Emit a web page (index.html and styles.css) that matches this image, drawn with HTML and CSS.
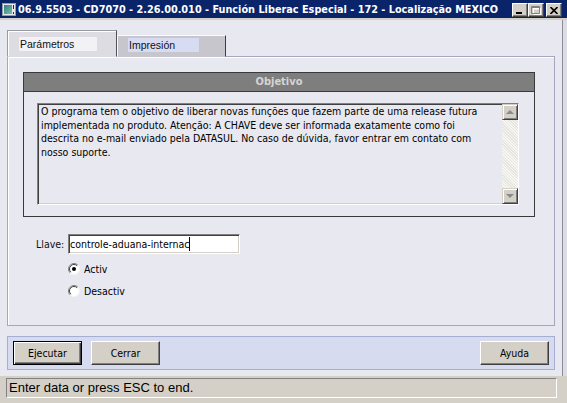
FILE: index.html
```html
<!DOCTYPE html>
<html lang="pt">
<head>
<meta charset="utf-8">
<title>CD7070</title>
<link rel="stylesheet" href="styles.css">
</head>
<body>
<div class="window">
  <div class="titlebar">
    <svg class="appicon" width="14" height="13" viewBox="0 0 14 13">
      <defs>
        <linearGradient id="ig" x1="0" y1="0" x2="1" y2="1">
          <stop offset="0" stop-color="#2f7f86"/>
          <stop offset="1" stop-color="#7cc0a4"/>
        </linearGradient>
      </defs>
      <rect x="0.5" y="0.5" width="13" height="12" fill="#e8e8e8" stroke="#9a9aa6"/>
      <rect x="2" y="2" width="8" height="9" fill="url(#ig)"/>
      <rect x="11" y="2" width="1" height="4" fill="#203040"/>
      <rect x="11" y="9" width="1" height="2" fill="#203040"/>
    </svg>
    <span class="title">06.9.5503 - CD7070 - 2.26.00.010 - Función Liberac Especial - 172 - Localização MEXICO</span>
    <div class="wbtns">
      <span class="wbtn"><svg width="8" height="7" viewBox="0 0 8 7"><rect x="0" y="5" width="6" height="2" fill="#000"/></svg></span>
      <span class="wbtn"><svg width="10" height="9" viewBox="0 0 10 9"><path d="M1.5 1.5h7v6h-7z M1 2h8" stroke="#fff" fill="none" transform="translate(1 1)"/><path d="M0.5 0.5h8v7h-8z M0 1.5h9" stroke="#808080" fill="none"/></svg></span>
      <span class="wbtn close"><svg width="8" height="7" viewBox="0 0 8 7"><path d="M0.5 0 L7.5 7 M7.5 0 L0.5 7" stroke="#000" stroke-width="1.6" fill="none"/></svg></span>
    </div>
  </div>

  <div class="frame">
    <div class="client">
      <div class="tabs">
        <div class="tab active"><span class="tablabel">Parámetros</span></div>
        <div class="tab"><span class="tablabel">Impresión</span></div>
      </div>
      <div class="panel">
        <div class="group">
          <div class="group-head">Objetivo</div>
          <div class="group-body">
            <div class="memo">
              <div class="memo-text">O programa tem o objetivo de liberar novas funções que fazem parte de uma release futura<br>implementada no produto. Atenção: A CHAVE deve ser informada exatamente como foi<br>descrita no e-mail enviado pela DATASUL. No caso de dúvida, favor entrar em contato com<br>nosso suporte.</div>
              <div class="vscroll">
                <div class="sbtn"><span class="arrow up"></span></div>
                <div class="strack"></div>
                <div class="sbtn"><span class="arrow down"></span></div>
              </div>
            </div>
          </div>
        </div>
        <div class="field">
          <span class="field-label">Llave:</span>
          <div class="input">controle-aduana-internac<span class="caret"></span></div>
        </div>
        <div class="radios">
          <div class="radio-row">
            <svg class="radio" width="12" height="12" viewBox="0 0 12 12">
              <circle cx="6" cy="6" r="5.5" fill="#fff"/>
              <path d="M2.1 9.9 A5.5 5.5 0 0 1 9.9 2.1" stroke="#808080" fill="none"/>
              <path d="M2.8 9.2 A4.5 4.5 0 0 1 9.2 2.8" stroke="#404040" fill="none"/>
              <path d="M9.9 2.1 A5.5 5.5 0 0 1 2.1 9.9" stroke="#f4f4f4" fill="none"/>
              <circle cx="6" cy="6" r="2" fill="#000"/>
            </svg>
            <span>Activ</span>
          </div>
          <div class="radio-row">
            <svg class="radio" width="12" height="12" viewBox="0 0 12 12">
              <circle cx="6" cy="6" r="5.5" fill="#fff"/>
              <path d="M2.1 9.9 A5.5 5.5 0 0 1 9.9 2.1" stroke="#808080" fill="none"/>
              <path d="M2.8 9.2 A4.5 4.5 0 0 1 9.2 2.8" stroke="#404040" fill="none"/>
              <path d="M9.9 2.1 A5.5 5.5 0 0 1 2.1 9.9" stroke="#f4f4f4" fill="none"/>
            </svg>
            <span>Desactiv</span>
          </div>
        </div>
      </div>
      <div class="btnbar">
        <button class="btn default">Ejecutar</button>
        <button class="btn">Cerrar</button>
        <button class="btn right">Ayuda</button>
      </div>
    </div>
    <div class="rframe"></div>
  </div>

  <div class="statusarea">
    <div class="status">Enter data or press ESC to end.</div>
  </div>
</div>
</body>
</html>
```

FILE: styles.css
```css
* { box-sizing: border-box; }
html, body { margin: 0; padding: 0; }
body {
  width: 567px;
  height: 403px;
  overflow: hidden;
  background: #d4d0c8;
  font-family: "DejaVu Sans Condensed", "DejaVu Sans", sans-serif;
  font-stretch: semi-condensed;
  font-size: 10.5px;
  color: #000;
}

.window {
  width: 567px;
  height: 403px;
  display: flex;
  flex-direction: column;
}

/* title bar */
.titlebar {
  flex: none;
  height: 20px;
  background: #0a246a;
  border-bottom: 2px solid #d4d0c8;
  display: flex;
  align-items: center;
  padding: 0 5px 0 2px;
}
.appicon { flex: none; display: block; }
.title {
  margin-left: 2px;
  color: #fff;
  font-weight: bold;
  font-size: 10.8px;
  white-space: nowrap;
}
.wbtns {
  margin-left: auto;
  margin-top: 2px;
  display: flex;
}
.wbtn {
  width: 16px;
  height: 14px;
  background: #d4d0c8;
  border: 1px solid;
  border-color: #fff #404040 #404040 #fff;
  box-shadow: inset -1px -1px #808080;
  display: flex;
  align-items: center;
  justify-content: center;
}
.wbtn svg { display: block; }
.wbtn.close { margin-left: 2px; }

/* frame */
.frame {
  flex: none;
  height: 356px;
  display: flex;
}
.client {
  width: 562px;
  flex: none;
  background: #e8e8f0;
  padding: 11px 7px 0 7px;
}
.rframe {
  flex: 1;
  border-left: 1px solid #8c8c96;
  background: #dcdce4;
}

/* tabs */
.tabs {
  display: flex;
  align-items: flex-end;
  height: 26px;
  margin-bottom: -1px;
}
.tab {
  width: 109px;
  height: 22px;
  background: #c6c6cc;
  border: 1px solid;
  border-color: #fbfbfd #3c3c44 transparent #fbfbfd;
  padding: 2px 0 0 10px;
}
.tab.active {
  position: relative;
  z-index: 1;
  width: 110px;
  height: 27px;
  background: #dcdce2;
  border-color: #9a9aa4 #505058 transparent #9a9aa4;
  box-shadow: inset 1px 1px #fff;
  padding: 6px 0 0 11px;
}
.tablabel {
  display: block;
  height: 14px;
  width: 71px;
  background: #d8dcf2;
  font-family: "Liberation Sans", Arial, sans-serif;
  font-stretch: normal;
  font-size: 10.5px;
  line-height: 14px;
  padding-left: 1px;
  color: #101010;
}
.tab.active .tablabel {
  width: 78px;
  background: #f2f2f6;
}

/* panel */
.panel {
  height: 270px;
  border: 1px solid #a4a8bc;
  box-shadow: inset 1px 1px #fff;
  padding: 15px 0 0 15px;
}

.group {
  width: 512px;
  height: 145px;
  border: 1px solid #3a3a3a;
  display: flex;
  flex-direction: column;
}
.group-head {
  flex: none;
  height: 19px;
  background: #7e7e7e;
  border-bottom: 1px solid #3a3a3a;
  color: #d4d4d4;
  font-weight: bold;
  font-size: 11px;
  line-height: 18px;
  text-align: center;
}
.group-body {
  padding: 11px 0 0 13px;
}
.memo {
  width: 482px;
  height: 102px;
  display: flex;
  border: 1px solid;
  border-color: #808080 #fff #fff #808080;
  box-shadow: inset 1px 1px #404040, inset -1px -1px #d4d0c8;
  background: #e8e8f0;
}
.memo-text {
  flex: 1;
  padding: 1px 0 0 3px;
  line-height: 13.6px;
  white-space: nowrap;
}
.vscroll {
  flex: none;
  width: 16px;
  display: flex;
  flex-direction: column;
}
.sbtn {
  flex: none;
  height: 16px;
  background: #d4d0c8;
  border: 1px solid;
  border-color: #d4d0c8 #404040 #404040 #d4d0c8;
  box-shadow: inset 1px 1px #fff, inset -1px -1px #808080;
  display: flex;
  align-items: center;
  justify-content: center;
}
.strack {
  flex: 1;
  background-color: #eeede8;
  background-image: repeating-linear-gradient(45deg, #f6f6f2 0 1px, #e6e5e0 1px 2px);
}
.arrow {
  width: 0;
  height: 0;
  border-left: 4px solid transparent;
  border-right: 4px solid transparent;
}
.arrow.up { border-bottom: 4px solid #8a8a8a; }
.arrow.down { border-top: 4px solid #8a8a8a; }

/* field */
.field {
  display: flex;
  align-items: center;
  margin-top: 17px;
  padding-left: 13px;
}
.field-label {
  width: 32px;
  color: #101010;
}
.input {
  width: 172px;
  height: 20px;
  background: #fff;
  border: 1px solid;
  border-color: #808080 #fff #fff #808080;
  box-shadow: inset 1px 1px #404040, inset -1px -1px #d4d0c8;
  padding-left: 1px;
  line-height: 18px;
  white-space: nowrap;
  display: flex;
  align-items: center;
}
.caret {
  display: inline-block;
  width: 1px;
  height: 14px;
  background: #000;
}

.radios {
  margin-top: 4px;
  padding-left: 45px;
}
.radio-row {
  height: 22px;
  display: flex;
  align-items: center;
  gap: 4px;
}
.radio { display: block; flex: none; }

/* button bar */
.btnbar {
  height: 34px;
  margin-top: 10px;
  background: #d6dbf0;
  border: 1px solid #a6aed2;
  display: flex;
  align-items: center;
  gap: 9px;
  padding: 0 5px;
}
.btn {
  width: 69px;
  height: 24px;
  margin: 0;
  padding: 0;
  background: #d4d0c8;
  border: 1px solid;
  border-color: #fff #404040 #404040 #fff;
  box-shadow: inset -1px -1px #808080;
  font: inherit;
  color: #000;
}
.btn.default {
  border-color: #000;
  box-shadow: inset 1px 1px #fff, inset -1px -1px #404040, inset -2px -2px #808080;
}
.btn.right { margin-left: auto; }

/* status */
.statusarea {
  flex: 1;
  padding: 2px 0 0 6px;
}
.status {
  width: 551px;
  height: 20px;
  border: 1px solid;
  border-color: #808080 #fff #fff #808080;
  font-family: "Liberation Sans", Arial, sans-serif;
  font-stretch: normal;
  font-size: 13px;
  line-height: 18px;
  padding-left: 2px;
  white-space: nowrap;
}
```
